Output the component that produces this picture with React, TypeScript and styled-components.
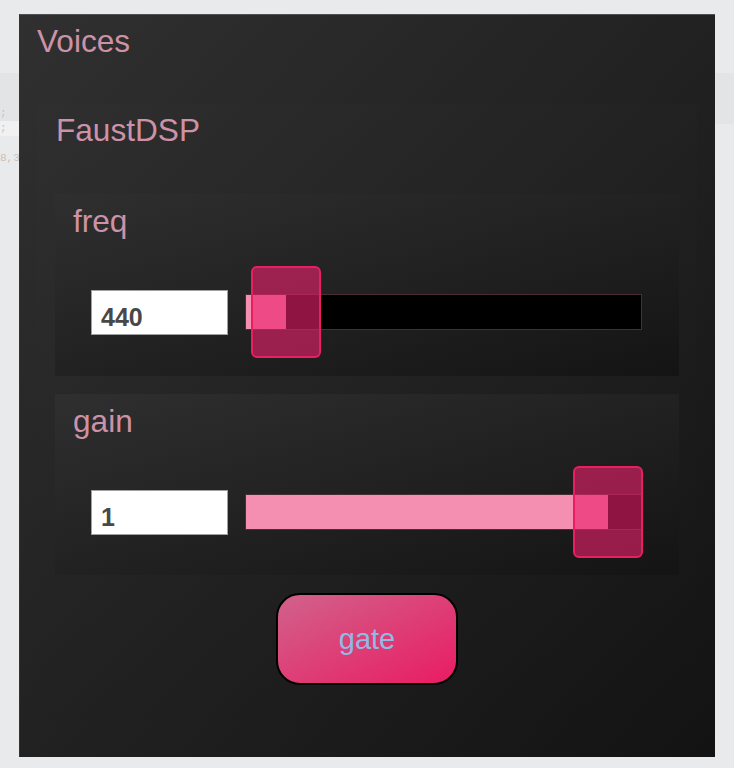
import * as React from 'react';
import styled, { createGlobalStyle } from 'styled-components';

const GlobalStyle = createGlobalStyle`
  html, body {
    margin: 0;
    padding: 0;
  }
  body {
    background:
      linear-gradient(#e9eaec, #e9eaec) 0 0 / 100% 73px no-repeat,
      linear-gradient(#e3e4e6, #e3e4e6) 0 73px / 100% 51px no-repeat,
      #e9eaec;
    font-family: 'Liberation Sans', Arial, sans-serif;
  }
`;

const labelColor = '#cd92a7';
const groupGradient = 'linear-gradient(to bottom right, #2f2f2f, #141414)';

const Page = styled.div`
  position: relative;
  padding: 14px 19px 11px;
  min-height: 743px;
  box-sizing: border-box;
`;

// faint code from the page behind the widget
const Backdrop = styled.pre`
  position: absolute;
  left: 0;
  top: 106px;
  margin: 0;
  font: 11px/15px 'Liberation Mono', monospace;
  color: #cbbfb8;
`;

const CodeLine = styled.div<{ $hl?: boolean }>`
  background: ${(p) => (p.$hl ? '#f1f1f2' : 'transparent')};
  color: ${(p) => (p.$hl ? '#c4c4c4' : 'inherit')};
  width: 19px;
`;

const Panel = styled.div`
  position: relative;
  width: 696px;
  height: 743px;
  box-sizing: border-box;
  border-top: 1px solid #505050;
  border-left: 1px solid #333;
  background: linear-gradient(to bottom right, #303030, #131313);
  padding: 8px 17px 0;
`;

const Label = styled.div`
  font-size: 31.6px;
  line-height: 36px;
  color: ${labelColor};
  white-space: nowrap;
`;

const Group = styled.div<{ $w: number; $h: number }>`
  width: ${(p) => p.$w}px;
  height: ${(p) => p.$h}px;
  box-sizing: border-box;
  background: ${groupGradient};
  display: flex;
  flex-direction: column;
`;

const DspGroup = styled(Group)`
  margin-top: 45px;
  padding: 8px 18px 0;
`;

const DspLabel = styled(Label)`
  padding-left: 1px;
  margin-bottom: 46px;
`;

const Stack = styled.div`
  display: flex;
  flex-direction: column;
  gap: 18px;
  align-items: center;
`;

const SliderGroup = styled(Group)`
  padding: 9px 18px 0;
`;

const Row = styled.div`
  display: flex;
  align-items: center;
  gap: 17px;
  margin-top: 27px;
  padding-left: 18px;
  height: 92px;
`;

const NumBox = styled.div`
  width: 137px;
  height: 45px;
  box-sizing: border-box;
  background: #fff;
  border: 1px solid #a0a0a0;
  padding: 11px 0 0 9px;
  font-weight: bold;
  font-size: 25px;
  line-height: 30px;
  color: #484848;
`;

const SliderBody = styled.div`
  position: relative;
  width: 397px;
  height: 92px;
  display: flex;
  align-items: center;
`;

const Track = styled.div`
  width: 100%;
  height: 36px;
  box-sizing: border-box;
  background: #000;
  border: 1px solid #4a2c37;
  display: flex;
`;

const Fill = styled.div`
  height: 100%;
  background: #f48fb1;
`;

const Handle = styled.div`
  position: absolute;
  top: 0;
  width: 70px;
  height: 92px;
  box-sizing: border-box;
  background: rgba(234, 33, 106, 0.61);
  border: 2px solid #ea1f62;
  border-radius: 6px;
`;

const GateButton = styled.button`
  width: 182px;
  height: 92px;
  box-sizing: border-box;
  border: 2px solid #000;
  border-radius: 24px;
  background: linear-gradient(to bottom right, #d1628b, #e91c62);
  color: #8fbbe3;
  font-family: 'Liberation Sans', Arial, sans-serif;
  font-size: 29px;
  padding: 0;
`;

const SLIDER_W = 397;
const HANDLE_W = 70;

interface SliderProps {
  label: string;
  value: string;
  ratio: number;
  height: number;
}

const HSlider = ({ label, value, ratio, height }: SliderProps) => {
  const left = Math.round(6 + ratio * (SLIDER_W - HANDLE_W - 5));
  return (
    <SliderGroup $w={624} $h={height}>
      <Label>{label}</Label>
      <Row>
        <NumBox>{value}</NumBox>
        <SliderBody>
          <Track>
            <Fill style={{ width: left + HANDLE_W / 2 - 1 }} />
          </Track>
          <Handle style={{ left }} />
        </SliderBody>
      </Row>
    </SliderGroup>
  );
};

export default function App() {
  return (
    <Page>
      <GlobalStyle />
      <Backdrop>
        <CodeLine>{';'}</CodeLine>
        <CodeLine $hl>{';'}</CodeLine>
        <CodeLine>{' '}</CodeLine>
        <CodeLine>{'8,3'}</CodeLine>
      </Backdrop>
      <Panel>
        <Label>Voices</Label>
        <DspGroup $w={660} $h={617}>
          <DspLabel>FaustDSP</DspLabel>
          <Stack>
            <HSlider label="freq" value="440" ratio={0} height={182} />
            <HSlider label="gain" value="1" ratio={1} height={181} />
            <GateButton>gate</GateButton>
          </Stack>
        </DspGroup>
      </Panel>
    </Page>
  );
}
